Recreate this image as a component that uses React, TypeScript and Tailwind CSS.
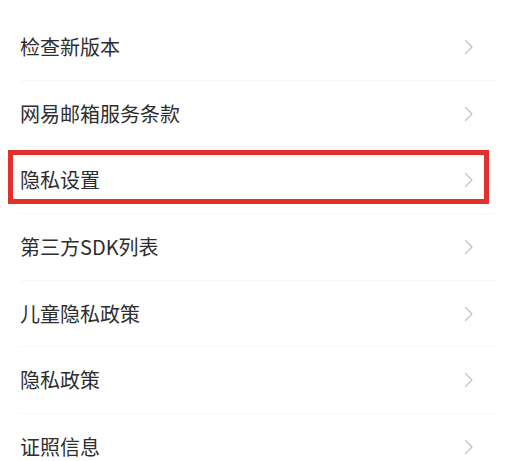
const items = [
  "检查新版本",
  "网易邮箱服务条款",
  "隐私设置",
  "第三方SDK列表",
  "儿童隐私政策",
  "隐私政策",
  "证照信息",
];

const Chevron: React.FC = () => (
  <svg width="10" height="16" viewBox="0 0 10 16" fill="none" className="shrink-0">
    <path d="M1.5 1.5L8 8L1.5 14.5" stroke="#c4c4c4" strokeWidth="1.3" strokeLinecap="round" strokeLinejoin="round" />
  </svg>
);

const App: React.FC = () => {
  return (
    <main
      className="w-[508px] h-[461px] overflow-hidden bg-white pt-[14px]"
      style={{ fontFamily: '"Noto Sans CJK SC", "Noto Sans", sans-serif' }}
    >
      <ul className="flex flex-col">
        {items.map((label, i) => (
          <li key={label} className="relative h-[66.7px] pl-5 pr-[11px]">
            <div className="flex h-full items-center justify-between border-b border-[#f7f7f7] pr-[23px]">
              <span className="text-[20px] leading-none text-[#2e2e2e]">{label}</span>
              <Chevron />
            </div>
            {/* highlight box */}
            {i === 2 && (
              <div className="absolute left-2 right-[19px] top-[3px] bottom-[10px] border-[5px] border-[#e3302b]" />
            )}
          </li>
        ))}
      </ul>
    </main>
  );
};

export default App;
